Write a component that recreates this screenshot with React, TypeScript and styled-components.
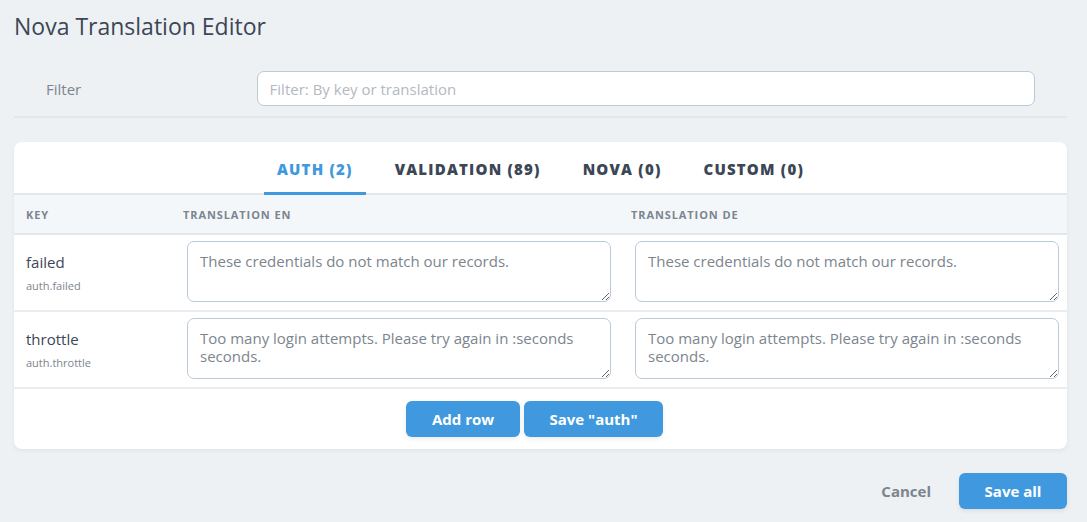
import React, { useState } from 'react';
import styled, { createGlobalStyle } from 'styled-components';

const GlobalStyle = createGlobalStyle`
  html, body {
    margin: 0;
    padding: 0;
    background: #eef1f4;
    font-family: "Open Sans", "Noto Sans", sans-serif;
    color: #3c4655;
  }
`;

type Row = { key: string; full: string; en: string; de: string };

const groups = [
  { name: 'auth', count: 2 },
  { name: 'validation', count: 89 },
  { name: 'nova', count: 0 },
  { name: 'custom', count: 0 },
];

const rows: Row[] = [
  {
    key: 'failed',
    full: 'auth.failed',
    en: 'These credentials do not match our records.',
    de: 'These credentials do not match our records.',
  },
  {
    key: 'throttle',
    full: 'auth.throttle',
    en: 'Too many login attempts. Please try again in :seconds seconds.',
    de: 'Too many login attempts. Please try again in :seconds seconds.',
  },
];

const App: React.FC = () => {
  const [active, setActive] = useState('auth');

  return (
    <Page>
      <GlobalStyle />
      <Title>Nova Translation Editor</Title>

      <FilterRow>
        <FilterLabel>Filter</FilterLabel>
        <FilterField>
          <FilterInput placeholder="Filter: By key or translation" />
        </FilterField>
      </FilterRow>

      <Card>
        <Tabs>
          {groups.map((g) => (
            <Tab key={g.name} $active={g.name === active} onClick={() => setActive(g.name)}>
              {g.name} ({g.count})
            </Tab>
          ))}
        </Tabs>

        <Table>
          <thead>
            <tr>
              <Th $width="157px">Key</Th>
              <Th>Translation en</Th>
              <Th>Translation de</Th>
            </tr>
          </thead>
          <tbody>
            {rows.map((r) => (
              <tr key={r.key}>
                <KeyCell>
                  <KeyName>{r.key}</KeyName>
                  <KeyPath>{r.full}</KeyPath>
                </KeyCell>
                <FieldCell>
                  <TextArea defaultValue={r.en} />
                </FieldCell>
                <FieldCell>
                  <TextArea defaultValue={r.de} />
                </FieldCell>
              </tr>
            ))}
          </tbody>
        </Table>

        <CardActions>
          <Button $minWidth="114px">Add row</Button>
          <Button $minWidth="139px">Save "auth"</Button>
        </CardActions>
      </Card>

      <Footer>
        <LinkButton>Cancel</LinkButton>
        <Button $minWidth="108px">Save all</Button>
      </Footer>
    </Page>
  );
};

const Page = styled.div`
  padding: 11px 20px 14px 14px;
`;

const Title = styled.h1`
  margin: 0;
  font-size: 23px;
  font-weight: 400;
  line-height: 30px;
  color: #3c4655;
`;

const FilterRow = styled.div`
  display: flex;
  align-items: center;
  padding: 30px 0 10px;
  border-bottom: 2px solid #e2e7eb;
`;

const FilterLabel = styled.label`
  width: 20%;
  box-sizing: border-box;
  padding: 0 32px;
  font-size: 15px;
  color: #7c858e;
`;

const FilterField = styled.div`
  flex: 1;
  padding: 0 32px;
`;

const FilterInput = styled.input`
  width: 100%;
  box-sizing: border-box;
  height: 35px;
  padding: 0 12px;
  border: 1px solid #bacad6;
  border-radius: 7px;
  background: #fff;
  font-family: inherit;
  font-size: 15px;
  color: #3c4655;
  outline: none;

  &::placeholder {
    color: #b3b9bf;
  }
`;

const Card = styled.div`
  margin-top: 24px;
  background: #fff;
  border-radius: 8px;
  box-shadow: 0 2px 4px rgba(0, 0, 0, 0.05);
  overflow: hidden;
`;

const Tabs = styled.div`
  display: flex;
  justify-content: center;
  gap: 16px;
  border-bottom: 2px solid #e2e7eb;
`;

const Tab = styled.button<{ $active?: boolean }>`
  padding: 17px 13px 13px;
  border: 0;
  border-bottom: 3px solid ${({ $active }) => ($active ? '#4099de' : 'transparent')};
  margin-bottom: -2px;
  background: none;
  font-family: inherit;
  font-size: 15px;
  font-weight: 800;
  letter-spacing: 1.2px;
  text-transform: uppercase;
  color: ${({ $active }) => ($active ? '#4099de' : '#3c4655')};
  cursor: pointer;
`;

const Table = styled.table`
  width: 100%;
  border-collapse: collapse;
  table-layout: fixed;
`;

const Th = styled.th<{ $width?: string }>`
  box-sizing: border-box;
  width: ${({ $width }) => $width ?? 'auto'};
  height: 39px;
  padding: 0 12px;
  background: #f4f7fa;
  border-bottom: 2px solid #e2e7eb;
  text-align: left;
  font-size: 11px;
  font-weight: 700;
  letter-spacing: 0.9px;
  text-transform: uppercase;
  color: #7c858e;
`;

const KeyCell = styled.td`
  padding: 0 12px;
  border-bottom: 2px solid #e9edf1;
  vertical-align: middle;
`;

const KeyName = styled.div`
  font-size: 15px;
  color: #3c4655;
  line-height: 20px;
`;

const KeyPath = styled.div`
  margin-top: 6px;
  font-size: 11px;
  color: #7c858e;
`;

const FieldCell = styled.td`
  padding: 6px 8px 8px 16px;
  border-bottom: 2px solid #e9edf1;
`;

const TextArea = styled.textarea`
  display: block;
  width: 100%;
  height: 61px;
  box-sizing: border-box;
  padding: 10px 12px;
  border: 1px solid #bacad6;
  border-radius: 7px;
  font-family: inherit;
  font-size: 15px;
  line-height: 18px;
  color: #7c858e;
  outline: none;
`;

const CardActions = styled.div`
  display: flex;
  justify-content: center;
  gap: 4px;
  padding: 12px 12px 12px 0;
`;

const Button = styled.button<{ $minWidth?: string }>`
  height: 36px;
  padding: 0 20px;
  min-width: ${({ $minWidth }) => $minWidth ?? 'auto'};
  border: 0;
  border-radius: 6px;
  background: #4099de;
  box-shadow: 0 2px 4px rgba(0, 0, 0, 0.08);
  font-family: inherit;
  font-size: 15px;
  font-weight: 700;
  color: #fff;
  cursor: pointer;
`;

const Footer = styled.div`
  display: flex;
  justify-content: flex-end;
  align-items: center;
  gap: 16px;
  margin-top: 24px;
`;

const LinkButton = styled.button`
  padding: 0 12px;
  border: 0;
  background: none;
  font-family: inherit;
  font-size: 15px;
  font-weight: 700;
  color: #7c858e;
  cursor: pointer;
`;

export default App;
